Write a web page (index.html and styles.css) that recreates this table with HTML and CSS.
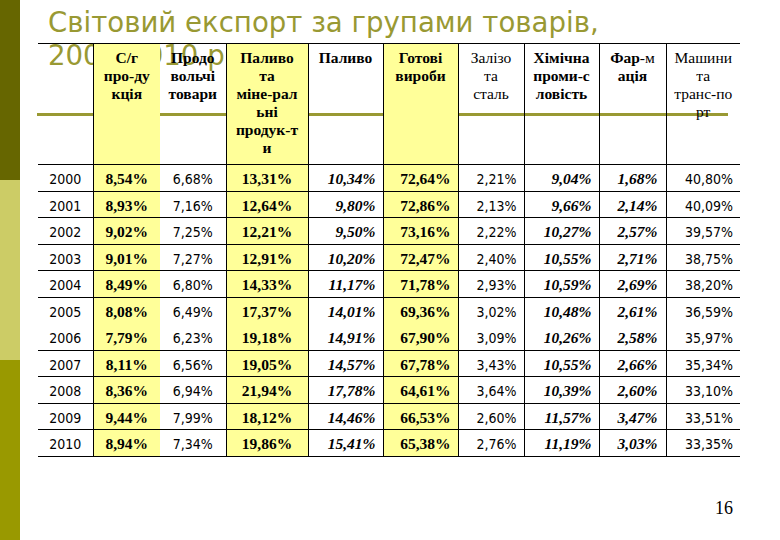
FILE: index.html
```html
<!DOCTYPE html>
<html lang="uk">
<head>
<meta charset="utf-8">
<title>Світовий експорт за групами товарів</title>
<link rel="stylesheet" href="styles.css">
</head>
<body>
<div class="slide">
  <div class="stripe"><div class="s1"></div><div class="s2"></div><div class="s3"></div></div>
  <div class="main">
    <div class="stage">
      <h1 class="title">Світовий експорт за групами товарів,<br>2000-2010 рр.</h1>
      <table class="data">
        <colgroup>
          <col class="w55"><col class="w67"><col class="w66"><col class="w82"><col class="w75">
          <col class="w75"><col class="w66"><col class="w75"><col class="w67"><col class="w74">
        </colgroup>
        <thead>
          <tr>
            <th></th>
            <th>С/г<br>про-ду<br>кція</th>
            <th>Продо<br>вольчі<br>товари</th>
            <th>Паливо<br>та<br>міне-рал<br>ьні<br>продук-т<br>и</th>
            <th>Паливо</th>
            <th>Готові<br>вироби</th>
            <th class="n">Залізо<br>та<br>сталь</th>
            <th>Хімічна<br>проми-с<br>ловість</th>
            <th>Фар<span class="n">-м</span><br>ація</th>
            <th class="n">Машини<br>та<br>транс-по<br>рт</th>
          </tr>
        </thead>
        <tbody>
          <tr><td>2000</td><td>8,54%</td><td>6,68%</td><td>13,31%</td><td>10,34%</td><td>72,64%</td><td>2,21%</td><td>9,04%</td><td>1,68%</td><td>40,80%</td></tr>
          <tr><td>2001</td><td>8,93%</td><td>7,16%</td><td>12,64%</td><td>9,80%</td><td>72,86%</td><td>2,13%</td><td>9,66%</td><td>2,14%</td><td>40,09%</td></tr>
          <tr><td>2002</td><td>9,02%</td><td>7,25%</td><td>12,21%</td><td>9,50%</td><td>73,16%</td><td>2,22%</td><td>10,27%</td><td>2,57%</td><td>39,57%</td></tr>
          <tr><td>2003</td><td>9,01%</td><td>7,27%</td><td>12,91%</td><td>10,20%</td><td>72,47%</td><td>2,40%</td><td>10,55%</td><td>2,71%</td><td>38,75%</td></tr>
          <tr><td>2004</td><td>8,49%</td><td>6,80%</td><td>14,33%</td><td>11,17%</td><td>71,78%</td><td>2,93%</td><td>10,59%</td><td>2,69%</td><td>38,20%</td></tr>
          <tr class="joined"><td>2005</td><td>8,08%</td><td>6,49%</td><td>17,37%</td><td>14,01%</td><td>69,36%</td><td>3,02%</td><td>10,48%</td><td>2,61%</td><td>36,59%</td></tr>
          <tr><td>2006</td><td>7,79%</td><td>6,23%</td><td>19,18%</td><td>14,91%</td><td>67,90%</td><td>3,09%</td><td>10,26%</td><td>2,58%</td><td>35,97%</td></tr>
          <tr><td>2007</td><td>8,11%</td><td>6,56%</td><td>19,05%</td><td>14,57%</td><td>67,78%</td><td>3,43%</td><td>10,55%</td><td>2,66%</td><td>35,34%</td></tr>
          <tr><td>2008</td><td>8,36%</td><td>6,94%</td><td>21,94%</td><td>17,78%</td><td>64,61%</td><td>3,64%</td><td>10,39%</td><td>2,60%</td><td>33,10%</td></tr>
          <tr><td>2009</td><td>9,44%</td><td>7,99%</td><td>18,12%</td><td>14,46%</td><td>66,53%</td><td>2,60%</td><td>11,57%</td><td>3,47%</td><td>33,51%</td></tr>
          <tr><td>2010</td><td>8,94%</td><td>7,34%</td><td>19,86%</td><td>15,41%</td><td>65,38%</td><td>2,76%</td><td>11,19%</td><td>3,03%</td><td>33,35%</td></tr>
        </tbody>
      </table>
    </div>
    <div class="pagenum">16</div>
  </div>
</div>
</body>
</html>
```
FILE: styles.css
```css
html, body {
  margin: 0;
  padding: 0;
  background: #fff;
}

.slide {
  display: flex;
  width: 780px;
  height: 540px;
  overflow: hidden;
}

.stripe {
  flex: none;
  width: 20px;
  display: flex;
  flex-direction: column;
}
.s1 { height: 180px; background: #666600; }
.s2 { height: 180px; background: #cccc66; }
.s3 { flex: 1; background: #999900; }

.main {
  flex: 1;
  display: flex;
  flex-direction: column;
}

.stage {
  display: grid;
}

.title {
  grid-area: 1 / 1;
  align-self: start;
  margin: 0 0 0 17px;
  width: 691px;
  height: 116px;
  box-sizing: border-box;
  padding: 6px 0 0 11px;
  border-bottom: 3px solid #999933;
  font-family: "DejaVu Sans", sans-serif;
  font-weight: normal;
  font-size: 27.6px;
  line-height: 33px;
  color: #999933;
  white-space: nowrap;
}

.data {
  grid-area: 1 / 1;
  align-self: start;
  position: relative;
  margin: 43px 0 0 18px;
  width: 702px;
  border-collapse: collapse;
  table-layout: fixed;
  color: #000;
  font-family: "Liberation Serif", "Times New Roman", serif;
}

.w55 { width: 55px; }
.w66 { width: 66px; }
.w67 { width: 67px; }
.w74 { width: 74px; }
.w75 { width: 75px; }
.w82 { width: 82px; }

.data th,
.data td {
  border-bottom: 1px solid #000;
  padding: 0;
}

.data th:nth-child(n+2),
.data td:nth-child(n+2) {
  border-left: 1px solid #000;
}
.data th:nth-child(3),
.data td:nth-child(3) {
  border-left: none;
}

.data th:nth-child(2),
.data th:nth-child(4),
.data th:nth-child(6),
.data td:nth-child(2),
.data td:nth-child(4),
.data td:nth-child(6) {
  background: #ffff99;
}

.data th {
  border-top: 1px solid #000;
  height: 121px;
  vertical-align: top;
  padding-top: 5px;
  box-sizing: border-box;
  font-size: 15.5px;
  line-height: 18px;
  font-weight: bold;
  text-align: center;
  white-space: nowrap;
}
.data .n { font-weight: normal; }

.data td {
  height: 26.5px;
  box-sizing: border-box;
  padding-top: 3px;
  vertical-align: middle;
  font-size: 15.5px;
  font-weight: bold;
  text-align: right;
  padding-right: 7px;
  white-space: nowrap;
}

.data td:nth-child(1),
.data td:nth-child(3),
.data td:nth-child(7),
.data td:nth-child(10) {
  font-family: "DejaVu Sans Condensed", "DejaVu Sans", sans-serif;
  font-size: 14px;
  font-weight: normal;
}

.data td:nth-child(1),
.data td:nth-child(2),
.data td:nth-child(3),
.data td:nth-child(4) {
  text-align: center;
  padding-right: 0;
}

.data td:nth-child(5),
.data td:nth-child(8),
.data td:nth-child(9) {
  font-style: italic;
}
.data td:nth-child(9) { padding-right: 8px; }

.data tr.joined td {
  border-bottom: none;
}

.pagenum {
  margin-top: auto;
  padding: 0 47px 22px 0;
  text-align: right;
  font-family: "Liberation Serif", serif;
  font-size: 18px;
  line-height: 20px;
  color: #000;
}
```
